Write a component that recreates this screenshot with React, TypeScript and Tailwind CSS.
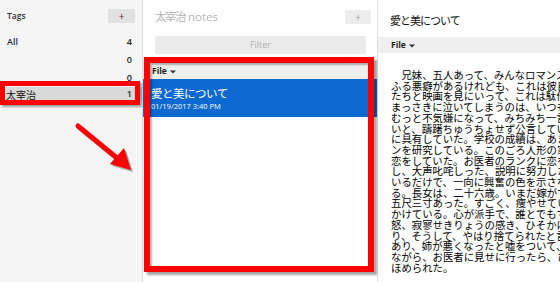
import React from "react";

const bodyLines = [
  "\u3000兄妹、五人あって、みんなロマンスが好きだった。",
  "ふる悪癖があるけれども、これは彼自身の弱さを庇う",
  "たちと映画を見にいって、これは駄作だ、愚劣だと言",
  "まっさきに泣いてしまうのは、いつも、この長兄である",
  "むっと不気嫌になって、みちみち一言も口をきかない。",
  "いと、躊躇ちゅうちょせず公言している。そのくせ",
  "に具有していた。学校の成績は、あまりよくなかった",
  "ンを研究している。このごろ人形の家を読んでいる",
  "恋をしていた。お医者のランクに恋をしていたのだ",
  "し、大声叱咤しった、説明に努力したのであるが",
  "いるだけで、一向に興奮の色を示さないのである",
  "る。長女は、二十六歳。いまだ嫁がず、鉄道省に",
  "五尺三寸あった。すごく、痩やせている。弟妹",
  "かけている。心が派手で、誰とでもすぐ友達になる",
  "怒、寂寥せきりょうの感き、ひそかに味わうのが",
  "り、そうして、やはり捨てられたと言って泣いた",
  "あり、姉が悪くなったと嘘をついて、大騒ぎした",
  "ながら、お医者に見せに行ったら、ひどく痩せて",
  "ほめられた。",
];

function Caret() {
  return (
    <svg width="6" height="4" viewBox="0 0 6 4" className="ml-[3px] mt-[1px]">
      <path d="M0 0.5 L6 0.5 L3 3.5 Z" fill="#333" />
    </svg>
  );
}

export default function App() {
  return (
    <div className="relative flex h-[282px] w-[560px] overflow-hidden bg-white font-['Open_Sans','Noto_Sans_CJK_JP',sans-serif]">
      {/* Left: tags */}
      <div className="flex w-[143px] shrink-0 flex-col border-r border-[#dcdcdc] bg-[#f5f5f5]">
        <div className="mt-[8px] flex h-[16px] items-center justify-between pl-[7px] pr-[7px]">
          <span className="text-[8.5px] font-semibold text-[#333]">Tags</span>
          <div className="flex h-[14px] w-[27px] items-center justify-center rounded-[2px] bg-[#e1e1e1] text-[10px] leading-none text-[#6b2a2a]">
            +
          </div>
        </div>
        <div className="mt-[9px] flex h-[18px] items-center justify-between pl-[7px] pr-[10px] text-[9px] font-semibold">
          <span className="text-[#1f2d4d]">All</span>
          <span className="text-[#222]">4</span>
        </div>
        <div className="flex h-[18px] items-center justify-end pr-[10px] text-[9px] font-semibold text-[#222]">
          0
        </div>
        <div className="flex h-[18px] items-center justify-end pr-[10px] text-[9px] font-semibold text-[#222]">
          0
        </div>
        <div className="flex h-[14px] items-center justify-between bg-[#d9d9d9] pl-[6px] pr-[10px]">
          <span className="font-['Noto_Sans_CJK_JP',sans-serif] text-[10px] text-[#111]">太宰治</span>
          <span className="text-[9px] font-semibold text-[#222]">1</span>
        </div>
      </div>

      {/* Middle: notes */}
      <div className="flex w-[235px] shrink-0 flex-col border-r border-[#e0e0e0] bg-white">
        <div className="mt-[10px] flex h-[14px] items-center justify-between pl-[12px] pr-[6px]">
          <span className="text-[11.5px] text-[#b5b5b5]">
            <span className="font-['Noto_Sans_CJK_JP',sans-serif] tracking-[-1.5px]">太宰治</span> notes
          </span>
          <div className="flex h-[14px] w-[26px] items-center justify-center rounded-[2px] bg-[#ededed] text-[10px] leading-none text-[#a0a0a0]">
            +
          </div>
        </div>
        <div className="mt-[12px] pl-[12px] pr-[11px]">
          <div className="flex h-[18px] items-center justify-center rounded-[2px] bg-[#ebebeb] text-[9px] text-[#b0b0b0]">
            Filter
          </div>
        </div>
        <div className="mt-[6px] flex flex-col">
          <div className="flex h-[19px] items-center bg-[#f0f0f0] pl-[9px] pt-[3px] text-[8.5px] font-bold text-[#222]">
            File
            <Caret />
          </div>
          <div className="flex h-[38px] flex-col justify-center bg-[#0b69d1] pl-[8px] text-white">
            <span className="font-['Noto_Sans_CJK_JP',sans-serif] text-[11.5px] leading-[14px] tracking-[-0.5px]">愛と美について</span>
            <span className="mt-[1px] text-[7.5px] leading-[10px]">01/19/2017 3:40 PM</span>
          </div>
        </div>
      </div>

      {/* Right: note */}
      <div className="flex min-w-0 flex-1 flex-col overflow-hidden bg-white">
        <div className="mt-[12px] flex h-[16px] items-center pl-[12px]">
          <span className="font-['Noto_Sans_CJK_JP',sans-serif] text-[11px] tracking-[-1px] text-[#111]">愛と美について</span>
        </div>
        <div className="mt-[9px] flex h-[16px] items-center bg-[#f0f0f0] pl-[13px] text-[8.5px] font-bold text-[#222]">
          File
          <Caret />
        </div>
        <div className="mt-[17px] pl-[13px] font-['Noto_Sans_CJK_JP',sans-serif] text-[10.4px] leading-[10.7px] text-black">
          {bodyLines.map((l, i) => (
            <div key={i} className="whitespace-nowrap">
              {l}
            </div>
          ))}
        </div>
      </div>

      {/* Annotations */}
      <div className="pointer-events-none absolute left-0 top-[81px] h-[24px] w-[140px] border-[5px] border-[#ff0000] shadow-[2px_2px_2px_rgba(0,0,0,0.35)]" />
      <div className="pointer-events-none absolute left-[144px] top-[57px] h-[215px] w-[230px] border-[6px] border-[#ff0000] shadow-[3px_3px_2px_rgba(0,0,0,0.35),inset_2px_2px_2px_rgba(0,0,0,0.3)]" />
      <svg className="pointer-events-none absolute left-0 top-0" width="560" height="282" viewBox="0 0 560 282">
        <g opacity="0.3" transform="translate(2 2)">
          <line x1="78" y1="126" x2="117" y2="158" stroke="#000" strokeWidth="5" strokeLinecap="round" />
          <polygon points="110,164 124,148 131,170" fill="#000" />
        </g>
        <line x1="78" y1="126" x2="117" y2="158" stroke="#ff0000" strokeWidth="5" strokeLinecap="round" />
        <polygon points="110,164 124,148 131,170" fill="#ff0000" />
      </svg>
    </div>
  );
}
